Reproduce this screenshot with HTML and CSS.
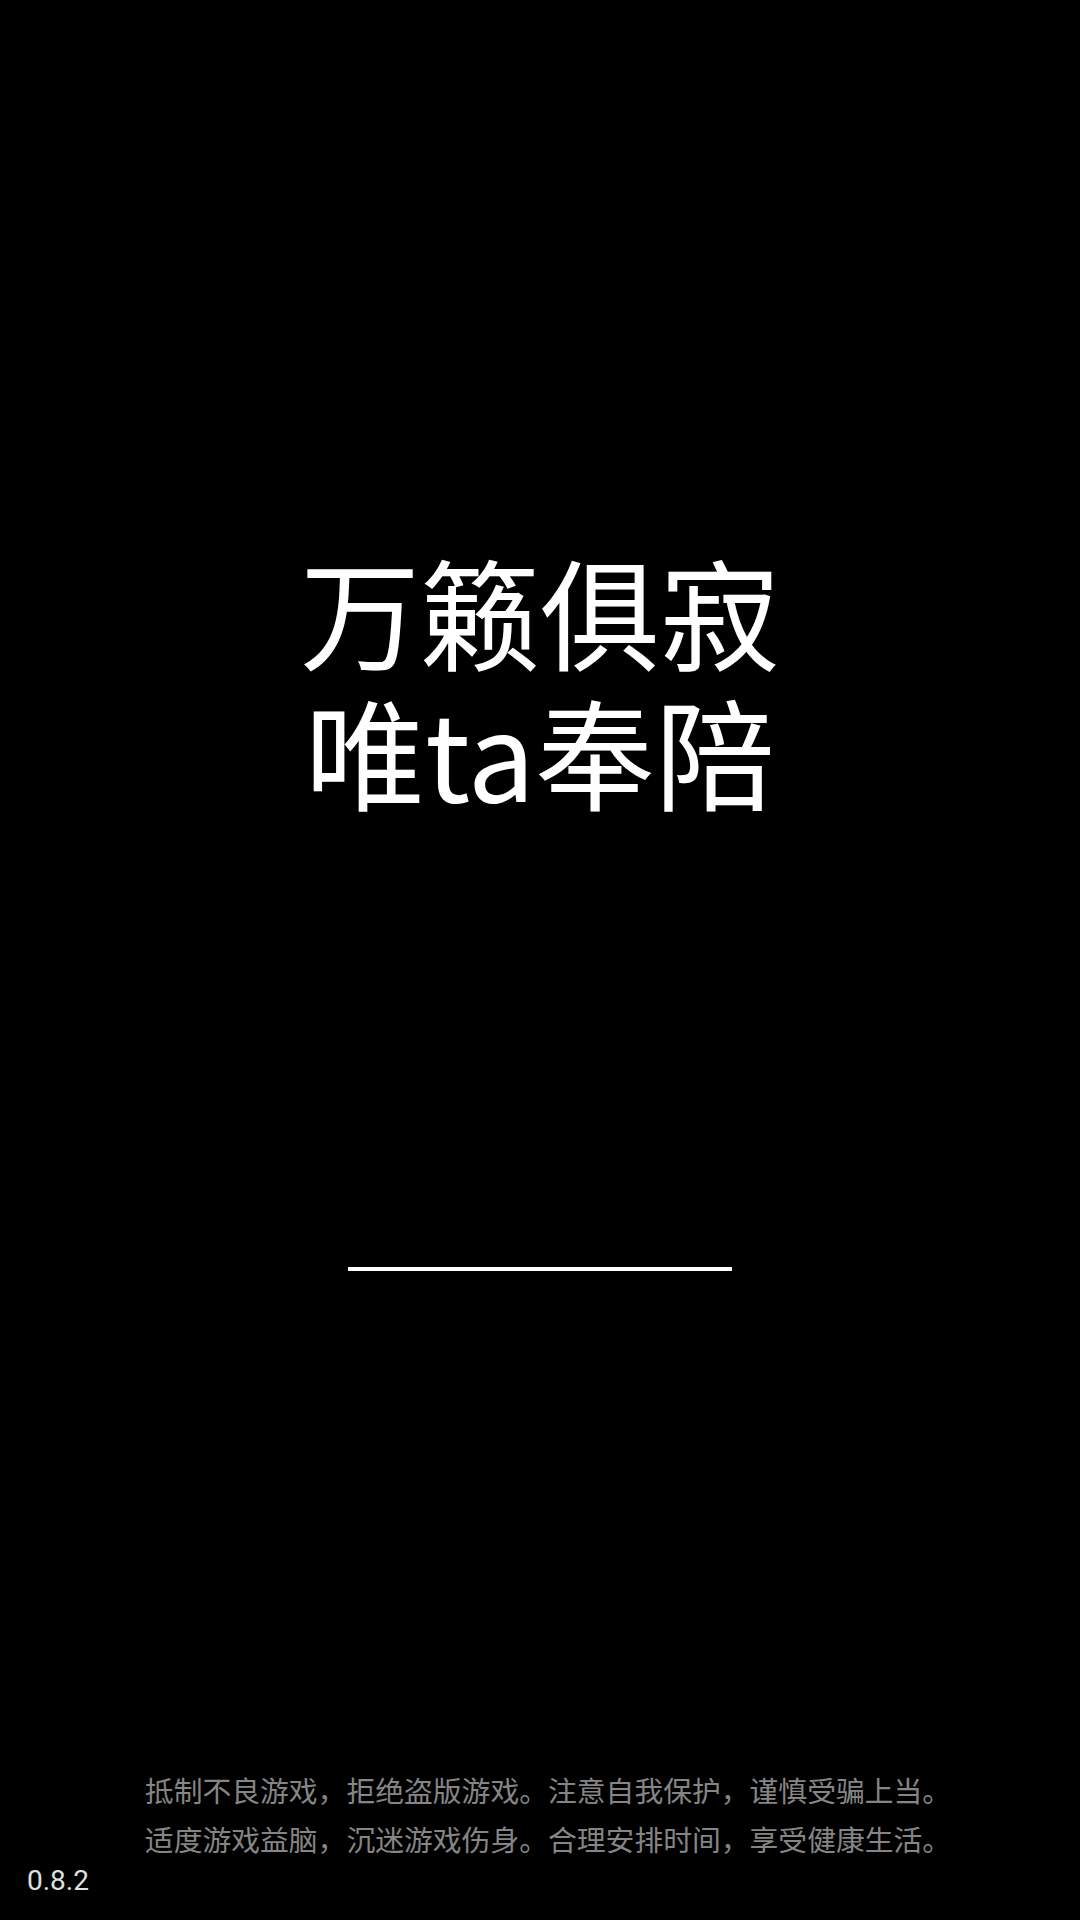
FILE: index.html
```html
<!DOCTYPE html>
<html lang="zh-CN">
<head>
<meta charset="utf-8">
<title>万籁俱寂 唯ta奉陪</title>
<link rel="stylesheet" href="styles.css">
</head>
<body>
<div class="screen">
  <h1 class="title">万籁俱寂<br>唯ta奉陪</h1>
  <div class="progress"></div>
  <div class="spacer"></div>
  <div class="notice">
    <div class="notice-line">抵制不良游戏，拒绝盗版游戏。注意自我保护，谨慎受骗上当。</div>
    <div class="notice-line">适度游戏益脑，沉迷游戏伤身。合理安排时间，享受健康生活。</div>
  </div>
  <div class="version">0.8.2</div>
</div>
</body>
</html>
```
FILE: styles.css
```css
html, body {
  margin: 0;
  padding: 0;
  background: #000;
}
.screen {
  width: 1080px;
  height: 1920px;
  display: flex;
  flex-direction: column;
  align-items: center;
  background: #000;
  font-family: "Noto Sans CJK SC", "Noto Sans", sans-serif;
}
.title {
  margin: 540px 0 0 0;
  text-align: center;
  white-space: nowrap;
  color: #fff;
  font-size: 120px;
  line-height: 140px;
  font-weight: 400;
}
.progress {
  margin-top: 447px;
  width: 384px;
  height: 4px;
  background: #fff;
}
.spacer {
  flex: 1;
}
.notice {
  display: flex;
  flex-direction: column;
  align-items: center;
  padding-left: 16px;
  color: #858585;
  font-size: 28.8px;
  line-height: 49px;
}
.notice-line {
  white-space: nowrap;
}
.version {
  align-self: flex-start;
  padding-left: 27px;
  margin-top: 1px;
  margin-bottom: 22px;
  font-family: Roboto, "Noto Sans", sans-serif;
  font-size: 28px;
  line-height: 34px;
  color: #e0e0e0;
}
```
